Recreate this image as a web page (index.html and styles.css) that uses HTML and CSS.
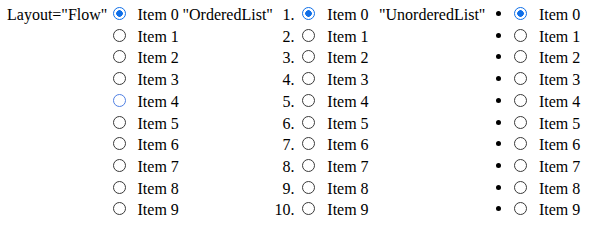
FILE: index.html
```html
<!DOCTYPE html>
<html>
<head>
<meta charset="utf-8">
<title>RadioButtonList layouts</title>
<link rel="stylesheet" href="styles.css">
</head>
<body>
<div class="demo">
  <div class="group group-flow">
    <span class="caption">Layout="Flow"</span>
    <div class="list">
      <div class="row"><input type="radio" name="a" class="radio" checked><span class="text">Item 0</span></div>
      <div class="row"><input type="radio" name="a" class="radio"><span class="text">Item 1</span></div>
      <div class="row"><input type="radio" name="a" class="radio"><span class="text">Item 2</span></div>
      <div class="row"><input type="radio" name="a" class="radio"><span class="text">Item 3</span></div>
      <div class="row"><input type="radio" name="a" class="radio is-hover"><span class="text">Item 4</span></div>
      <div class="row"><input type="radio" name="a" class="radio"><span class="text">Item 5</span></div>
      <div class="row"><input type="radio" name="a" class="radio"><span class="text">Item 6</span></div>
      <div class="row"><input type="radio" name="a" class="radio"><span class="text">Item 7</span></div>
      <div class="row"><input type="radio" name="a" class="radio"><span class="text">Item 8</span></div>
      <div class="row"><input type="radio" name="a" class="radio"><span class="text">Item 9</span></div>
    </div>
  </div>
  <div class="group group-ordered">
    <span class="caption">"OrderedList"</span>
    <div class="list">
      <div class="row"><span class="num">1.</span><input type="radio" name="b" class="radio" checked><span class="text">Item 0</span></div>
      <div class="row"><span class="num">2.</span><input type="radio" name="b" class="radio"><span class="text">Item 1</span></div>
      <div class="row"><span class="num">3.</span><input type="radio" name="b" class="radio"><span class="text">Item 2</span></div>
      <div class="row"><span class="num">4.</span><input type="radio" name="b" class="radio"><span class="text">Item 3</span></div>
      <div class="row"><span class="num">5.</span><input type="radio" name="b" class="radio"><span class="text">Item 4</span></div>
      <div class="row"><span class="num">6.</span><input type="radio" name="b" class="radio"><span class="text">Item 5</span></div>
      <div class="row"><span class="num">7.</span><input type="radio" name="b" class="radio"><span class="text">Item 6</span></div>
      <div class="row"><span class="num">8.</span><input type="radio" name="b" class="radio"><span class="text">Item 7</span></div>
      <div class="row"><span class="num">9.</span><input type="radio" name="b" class="radio"><span class="text">Item 8</span></div>
      <div class="row"><span class="num">10.</span><input type="radio" name="b" class="radio"><span class="text">Item 9</span></div>
    </div>
  </div>
  <div class="group group-unordered">
    <span class="caption">"UnorderedList"</span>
    <div class="list">
      <div class="row"><span class="bullet"></span><input type="radio" name="c" class="radio" checked><span class="text">Item 0</span></div>
      <div class="row"><span class="bullet"></span><input type="radio" name="c" class="radio"><span class="text">Item 1</span></div>
      <div class="row"><span class="bullet"></span><input type="radio" name="c" class="radio"><span class="text">Item 2</span></div>
      <div class="row"><span class="bullet"></span><input type="radio" name="c" class="radio"><span class="text">Item 3</span></div>
      <div class="row"><span class="bullet"></span><input type="radio" name="c" class="radio"><span class="text">Item 4</span></div>
      <div class="row"><span class="bullet"></span><input type="radio" name="c" class="radio"><span class="text">Item 5</span></div>
      <div class="row"><span class="bullet"></span><input type="radio" name="c" class="radio"><span class="text">Item 6</span></div>
      <div class="row"><span class="bullet"></span><input type="radio" name="c" class="radio"><span class="text">Item 7</span></div>
      <div class="row"><span class="bullet"></span><input type="radio" name="c" class="radio"><span class="text">Item 8</span></div>
      <div class="row"><span class="bullet"></span><input type="radio" name="c" class="radio"><span class="text">Item 9</span></div>
    </div>
  </div>
</div>
</body>
</html>
```
FILE: styles.css
```css
html, body {
  margin: 0;
  padding: 0;
  background: #ffffff;
}

.demo {
  display: flex;
  align-items: flex-start;
  padding: 4px 0 0 7px;
  font-family: "Liberation Serif", "Times New Roman", serif;
  font-size: 16px;
  color: #000000;
  line-height: 21.73px;
}

.group {
  display: flex;
  align-items: flex-start;
  flex-shrink: 0;
}

.group-flow {
  width: 175.5px;
}

.group-ordered {
  width: 196.5px;
}

.caption {
  display: block;
  flex-shrink: 0;
  white-space: nowrap;
}

.group-flow .caption {
  width: 100.5px;
}

.group-ordered .caption {
  width: 92px;
}

.group-unordered .caption {
  width: 116.8px;
}

.list {
  flex-shrink: 0;
}

.row {
  white-space: nowrap;
  height: 21.73px;
}

.num {
  display: inline-block;
  width: 20px;
  text-align: right;
}

.bullet {
  display: inline-block;
  width: 5px;
  height: 5px;
  border-radius: 50%;
  background: #000000;
  vertical-align: 4px;
}

.radio {
  -webkit-appearance: none;
  appearance: none;
  box-sizing: border-box;
  width: 13px;
  height: 13px;
  margin: 3px 12px 0 5px;
  padding: 0;
  border: 1px solid #3a3a3a;
  border-radius: 50%;
  background: #ffffff;
  vertical-align: baseline;
  display: inline-block;
}

.group-ordered .radio {
  margin-left: 7.8px;
}

.group-unordered .radio {
  margin-left: 13.2px;
}

.radio:checked {
  border: 1.4px solid #0f6fe8;
  background: radial-gradient(circle, #0f6fe8 0 3px, #ffffff 3.6px);
}

.radio.is-hover {
  border-color: #4f7fe3;
}
```
